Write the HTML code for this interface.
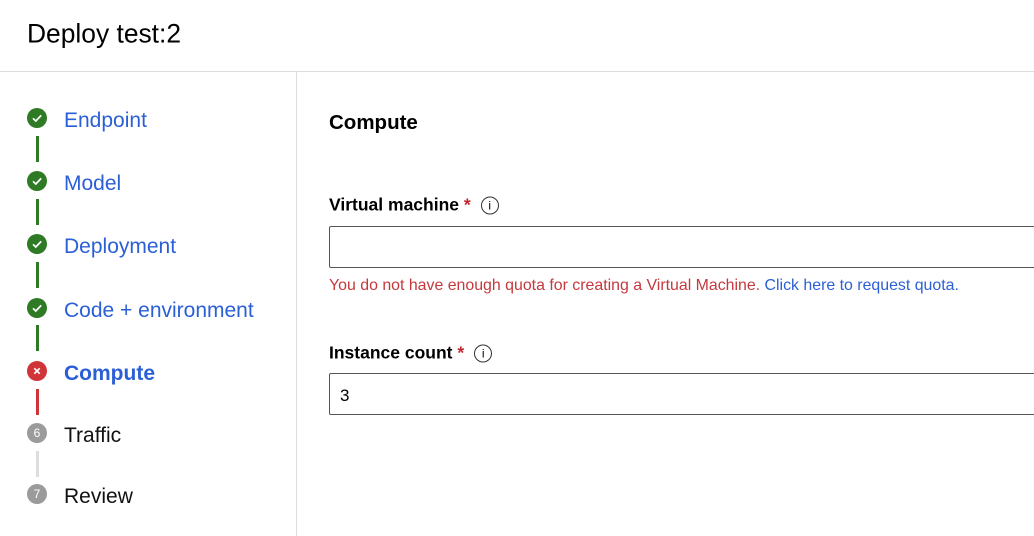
<!DOCTYPE html>
<html><head><style>
body{margin:0;width:1034px;height:536px;overflow:hidden;background:#fff;font-family:"Liberation Sans",sans-serif;position:relative;color:#000}
.a{position:absolute;white-space:nowrap}
.c{position:absolute;left:27px;width:20px;height:20px;border-radius:50%;color:#fff;font-size:12px;text-align:center;line-height:20px}
.g{background:#2f7a24}.r{background:#d13438}.n{background:#9b9b9b}
.l{position:absolute;left:36px;width:3px;height:26px}
.s{left:64px;font-size:21px;color:#2b5fd6;transform:translateY(-50%)}
.lab{left:329px;font-size:17.5px;font-weight:bold;transform:translateY(-50%)}
.info{display:inline-block;width:18px;height:18px;border:1.3px solid #333;border-radius:50%;font-size:12px;font-weight:normal;text-align:center;vertical-align:middle;margin-left:10px;box-sizing:border-box;line-height:16px}
.in{position:absolute;left:329px;width:720px;height:42px;border:1px solid #555;box-sizing:border-box;border-radius:2px}
</style></head><body>
<div class="a" style="left:27px;top:34px;transform:translateY(-50%);font-size:26.4px">Deploy test:2</div>
<div class="a" style="left:0;top:71px;width:1034px;height:1px;background:#ddd"></div>
<div class="a" style="left:296px;top:72px;width:1px;height:464px;background:#ddd"></div>

<div class="c g" style="top:108px"><svg width="20" height="20"><path d="M6 10.3l2.8 2.7 5.4-5.6" stroke="#fff" stroke-width="1.7" fill="none"/></svg></div>
<div class="l g" style="top:136px"></div>
<div class="c g" style="top:171px"><svg width="20" height="20"><path d="M6 10.3l2.8 2.7 5.4-5.6" stroke="#fff" stroke-width="1.7" fill="none"/></svg></div>
<div class="l g" style="top:199px"></div>
<div class="c g" style="top:234px"><svg width="20" height="20"><path d="M6 10.3l2.8 2.7 5.4-5.6" stroke="#fff" stroke-width="1.7" fill="none"/></svg></div>
<div class="l g" style="top:262px"></div>
<div class="c g" style="top:298px"><svg width="20" height="20"><path d="M6 10.3l2.8 2.7 5.4-5.6" stroke="#fff" stroke-width="1.7" fill="none"/></svg></div>
<div class="l g" style="top:325px"></div>
<div class="c r" style="top:361px"><svg width="20" height="20"><path d="M7.3 7.3l5.4 5.4M12.7 7.3l-5.4 5.4" stroke="#fff" stroke-width="1.7"/></svg></div>
<div class="l r" style="top:389px"></div>
<div class="c n" style="top:423px">6</div>
<div class="l" style="top:451px;background:#ddd"></div>
<div class="c n" style="top:484px">7</div>

<div class="a s" style="top:121px">Endpoint</div>
<div class="a s" style="top:184px">Model</div>
<div class="a s" style="top:247px">Deployment</div>
<div class="a s" style="top:311px">Code + environment</div>
<div class="a s" style="top:374px;font-weight:bold">Compute</div>
<div class="a s" style="top:436px;color:#111">Traffic</div>
<div class="a s" style="top:497px;color:#111">Review</div>

<div class="a lab" style="top:123px;font-size:20.5px">Compute</div>
<div class="a lab" style="top:205px">Virtual machine <span style="color:#c4262e">*</span><span class="info">i</span></div>
<div class="in" style="top:226px"></div>
<div class="a" style="left:329px;top:286px;transform:translateY(-50%);font-size:15.9px;color:#c4393d">You do not have enough quota for creating a Virtual Machine. <span style="color:#2b5fd6">Click here to request quota.</span></div>
<div class="a lab" style="top:353px">Instance count <span style="color:#c4262e">*</span><span class="info">i</span></div>
<div class="in" style="top:373px"></div>
<div class="a" style="left:340px;top:396px;transform:translateY(-50%);font-size:17px">3</div>
</body></html>
